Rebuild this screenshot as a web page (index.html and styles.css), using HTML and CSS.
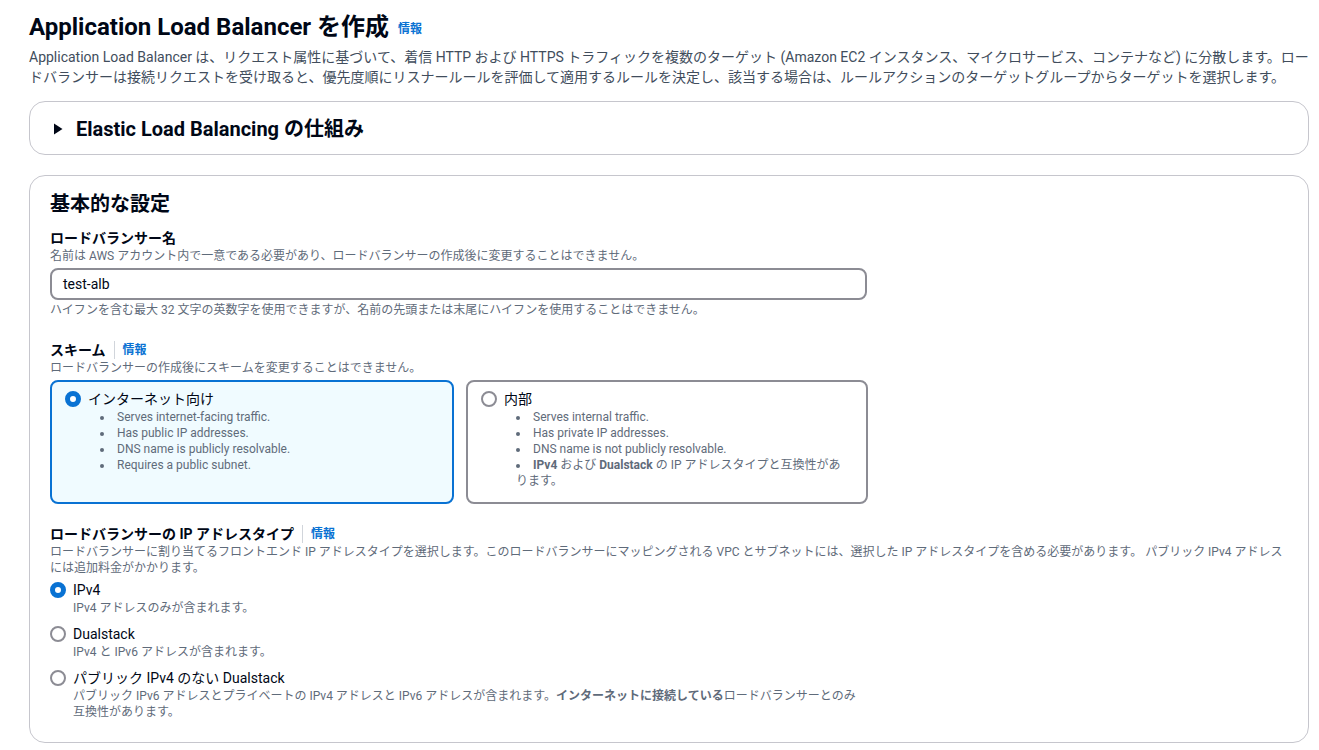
FILE: index.html
```html
<!DOCTYPE html>
<html lang="ja">
<head>
  <meta charset="UTF-8" />
  <meta name="viewport" content="width=device-width, initial-scale=1.0"/>
  <title>Application Load Balancer を作成</title>
  <link rel="stylesheet" href="styles.css">
</head>
<body>
  <header class="page-head">
    <h1>Application Load Balancer を作成 <a class="info" href="#">情報</a></h1>
    <p class="lead">Application Load Balancer は、リクエスト属性に基づいて、着信 HTTP および HTTPS トラフィックを複数のターゲット (Amazon EC2 インスタンス、マイクロサービス、コンテナなど) に分散します。ロードバランサーは接続リクエストを受け取ると、優先度順にリスナールールを評価して適用するルールを決定し、該当する場合は、ルールアクションのターゲットグループからターゲットを選択します。</p>
  </header>

  <section class="expander">
    <svg class="caret" width="10" height="12" viewBox="0 0 10 12"><path d="M1 0.5 L9.5 6 L1 11.5 Z" fill="#000716"/></svg>
    <span>Elastic Load Balancing の仕組み</span>
  </section>

  <section class="panel">
    <h2>基本的な設定</h2>

    <div class="field field-name">
      <div class="label">ロードバランサー名</div>
      <div class="desc">名前は AWS アカウント内で一意である必要があり、ロードバランサーの作成後に変更することはできません。</div>
      <div class="input">test-alb</div>
      <div class="constraint">ハイフンを含む最大 32 文字の英数字を使用できますが、名前の先頭または末尾にハイフンを使用することはできません。</div>
    </div>

    <div class="field field-scheme">
      <div class="label">スキーム <span class="sep"></span><a class="info" href="#">情報</a></div>
      <div class="desc">ロードバランサーの作成後にスキームを変更することはできません。</div>
      <div class="tiles">
        <div class="tile selected">
          <span class="radio on"></span>
          <div class="tile-body">
            <div class="tile-title">インターネット向け</div>
            <ul>
              <li>Serves internet-facing traffic.</li>
              <li>Has public IP addresses.</li>
              <li>DNS name is publicly resolvable.</li>
              <li>Requires a public subnet.</li>
            </ul>
          </div>
        </div>
        <div class="tile">
          <span class="radio"></span>
          <div class="tile-body">
            <div class="tile-title">内部</div>
            <ul>
              <li>Serves internal traffic.</li>
              <li>Has private IP addresses.</li>
              <li>DNS name is not publicly resolvable.</li>
              <li><b>IPv4</b> および <b>Dualstack</b> の IP アドレスタイプと互換性があります。</li>
            </ul>
          </div>
        </div>
      </div>
    </div>

    <div class="field field-ip">
      <div class="label">ロードバランサーの IP アドレスタイプ <span class="sep"></span><a class="info" href="#">情報</a></div>
      <div class="desc">ロードバランサーに割り当てるフロントエンド IP アドレスタイプを選択します。このロードバランサーにマッピングされる VPC とサブネットには、選択した IP アドレスタイプを含める必要があります。 パブリック IPv4 アドレスには追加料金がかかります。</div>
      <div class="options">
        <div class="option">
          <span class="radio on"></span>
          <div>
            <div class="opt-title">IPv4</div>
            <div class="opt-desc">IPv4 アドレスのみが含まれます。</div>
          </div>
        </div>
        <div class="option">
          <span class="radio"></span>
          <div>
            <div class="opt-title">Dualstack</div>
            <div class="opt-desc">IPv4 と IPv6 アドレスが含まれます。</div>
          </div>
        </div>
        <div class="option">
          <span class="radio"></span>
          <div>
            <div class="opt-title">パブリック IPv4 のない Dualstack</div>
            <div class="opt-desc narrow">パブリック IPv6 アドレスとプライベートの IPv4 アドレスと IPv6 アドレスが含まれます。<b>インターネットに接続している</b>ロードバランサーとのみ互換性があります。</div>
          </div>
        </div>
      </div>
    </div>
  </section>
</body>
</html>
```

FILE: styles.css
```css
/* Page base */
body {
  margin: 0;
  padding: 11px 10px 0 29px;
  font-family: Roboto, "Noto Sans CJK JP", sans-serif;
  color: #000716;
  background: #fff;
}

a.info {
  color: #0972d3;
  font-size: 12px;
  font-weight: bold;
  text-decoration: none;
}

/* Header */
.page-head h1 {
  margin: 0;
  font-size: 24px;
  line-height: 32px;
  font-weight: bold;
}

.page-head h1 .info {
  margin-left: 3px;
  vertical-align: 2px;
}

.lead {
  margin: 2px 0 0;
  font-size: 14px;
  line-height: 20px;
  color: #414d5c;
}

/* Expandable section */
.expander {
  margin-top: 14px;
  border: 1px solid #c6c6cd;
  border-radius: 16px;
  padding: 15px 23px 13px;
  display: flex;
  align-items: center;
  gap: 13px;
  font-size: 20px;
  line-height: 24px;
  font-weight: bold;
}

/* Main container */
.panel {
  margin-top: 20px;
  border: 1px solid #c6c6cd;
  border-radius: 16px;
  padding: 16px 20px 22px;
}

.panel h2 {
  margin: 0;
  font-size: 20px;
  line-height: 24px;
  font-weight: bold;
}

.field-name {
  margin-top: 12px;
}

.field-scheme {
  margin-top: 22px;
}

.field-ip {
  margin-top: 20px;
}

.label {
  font-size: 14px;
  line-height: 20px;
  font-weight: bold;
  display: flex;
  align-items: center;
}

.label .sep {
  display: inline-block;
  width: 1px;
  height: 18px;
  background: #d1d5db;
  margin: 0 8px 0 8px;
}

.desc, .constraint {
  font-size: 12px;
  line-height: 16px;
  color: #5f6b7a;
}

.input {
  margin-top: 4px;
  width: 817px;
  box-sizing: border-box;
  height: 32px;
  border: 2px solid #8c8c94;
  border-radius: 8px;
  padding: 0 11px;
  font-size: 14px;
  line-height: 28px;
}

.constraint {
  margin-top: 2px;
}

/* Scheme tiles */
.tiles {
  margin-top: 4px;
  width: 818px;
  display: grid;
  grid-template-columns: 404px 402px;
  gap: 12px;
}

.tile {
  border: 2px solid #8c8c94;
  border-radius: 8px;
  padding: 7px 13px 12px;
  height: 124px;
  box-sizing: border-box;
  display: flex;
  gap: 7px;
}

.tile.selected {
  border-color: #0972d3;
  background: #f0fbff;
}

.tile .radio {
  margin-top: 2px;
}

.tile-title {
  font-size: 14px;
  line-height: 20px;
}

.tile ul {
  margin: 0;
  padding: 0 8px 0 12px;
  list-style: disc inside;
  font-size: 12px;
  line-height: 16px;
  color: #5f6b7a;
}

.tile li::marker {
  color: #5f6b7a;
}

/* Radios */
.radio {
  flex: none;
  width: 16px;
  height: 16px;
  box-sizing: border-box;
  border: 2px solid #8c8c94;
  border-radius: 50%;
  background: #fff;
}

.radio.on {
  border: 5px solid #0972d3;
}

.options {
  margin-top: 4px;
  display: flex;
  flex-direction: column;
  gap: 8px;
}

.option {
  display: flex;
  gap: 7px;
}

.option .radio {
  margin-top: 2px;
}

.opt-title {
  font-size: 14px;
  line-height: 20px;
}

.opt-desc {
  font-size: 12px;
  line-height: 16px;
  color: #5f6b7a;
}

.opt-desc.narrow {
  width: 790px;
}
```
